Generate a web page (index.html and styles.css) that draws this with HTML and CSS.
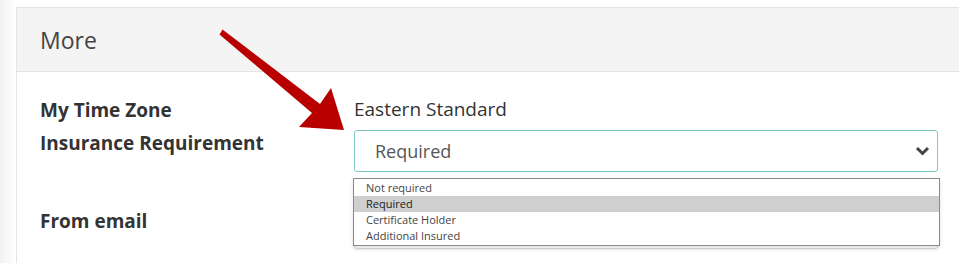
FILE: index.html
```html
<!DOCTYPE html>
<html lang="en">
<head>
    <meta charset="UTF-8">
    <meta name="viewport" content="width=device-width, initial-scale=1.0">
    <title>More Settings</title>
    <link rel="stylesheet" href="styles.css">
</head>
<body>
    <div class="page">
        <div class="panel">
            <div class="panel-heading">More</div>
            <div class="panel-body">
                <div class="row row-first">
                    <div class="label">My Time Zone</div>
                    <div class="value">Eastern Standard</div>
                </div>
                <div class="row">
                    <div class="label">Insurance Requirement</div>
                    <div class="field">
                        <div class="select">
                            <span>Required</span>
                            <svg class="chevron" width="15" height="10" viewBox="0 0 15 10">
                                <polyline points="2,2 7.5,7.5 13,2" fill="none" stroke="#444" stroke-width="3"/>
                            </svg>
                        </div>
                        <ul class="options">
                            <li>Not required</li>
                            <li class="selected">Required</li>
                            <li>Certificate Holder</li>
                            <li>Additional Insured</li>
                        </ul>
                    </div>
                </div>
                <div class="row row-email">
                    <div class="label">From email</div>
                    <div class="input"></div>
                </div>
            </div>
        </div>

        <!-- annotation arrow -->
        <svg class="arrow" width="959" height="263" viewBox="0 0 959 263">
            <polygon fill="#b80000" points="219.5,34.5 222.5,29.5 320,104 331,88 344,130 299,127 312,113"/>
        </svg>
    </div>
</body>
</html>
```

FILE: styles.css
```css
body {
    margin: 0;
    font-family: "Open Sans", Arial, sans-serif;
    color: #333;
    background-color: #fff;
    overflow: hidden;
}
.page {
    position: relative;
    height: 263px;
    padding-top: 7px;
    padding-left: 16px;
    box-sizing: border-box;
    overflow: hidden;
    background: linear-gradient(to right, #f1f1f1 0, #fafafa 10px, #fff 16px);
}
.panel {
    width: 960px;
    height: 255px;
    background-color: #fff;
    border: 1px solid #e4e4e4;
    border-right: none;
    border-bottom: none;
}
.panel-heading {
    height: 63px;
    line-height: 64px;
    padding-left: 23px;
    font-size: 23px;
    color: #444;
    background-color: #f4f4f4;
    border-bottom: 1px solid #e4e4e4;
}
.panel-body {
    padding: 25px 0 0 23px;
}
.row {
    display: grid;
    grid-template-columns: 314px 584px;
    margin-top: 8px;
}
.row-first {
    margin-top: 0;
}
.row-email {
    margin-top: 36px;
}
.label {
    font-size: 19px;
    font-weight: 700;
    line-height: 24px;
    padding-top: 1px;
    color: #333;
}
.value {
    font-size: 19px;
    line-height: 24px;
    color: #333;
}
.field {
    position: relative;
}
.select {
    display: flex;
    align-items: center;
    justify-content: space-between;
    height: 40px;
    padding: 0 7px 0 20px;
    border: 1px solid #7dc9c3;
    border-radius: 3px;
    font-size: 18px;
    color: #555;
}
.chevron {
    display: block;
}
.input {
    height: 39px;
    border: 1px solid #d8d8d8;
    border-radius: 3px;
    box-shadow: 0 1px 2px rgba(0, 0, 0, 0.08);
}
.options {
    position: absolute;
    top: 48px;
    left: -1px;
    width: 585px;
    margin: 0;
    padding: 1px 0;
    list-style: none;
    background-color: #fff;
    border: 1px solid #8a8a8a;
    box-shadow: 0 2px 4px rgba(0, 0, 0, 0.12);
    z-index: 2;
}
.options li {
    height: 16px;
    line-height: 16px;
    padding-left: 12px;
    font-size: 11px;
    color: #444;
}
.options li.selected {
    background-color: #cfcfcf;
    color: #222;
}
.arrow {
    position: absolute;
    top: 0;
    left: 0;
    z-index: 3;
}
```
